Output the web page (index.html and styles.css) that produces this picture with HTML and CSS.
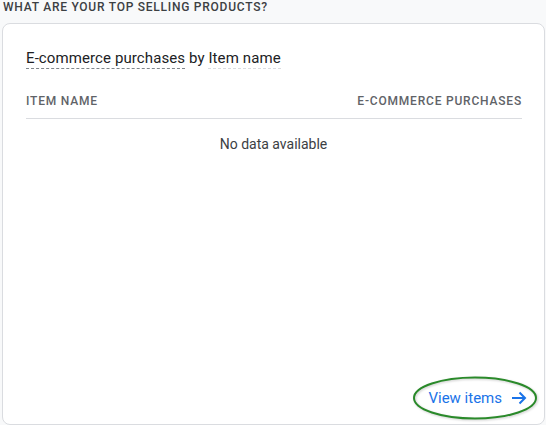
FILE: index.html
```html
<!DOCTYPE html>
<html>
<head>
<meta charset="utf-8">
<link rel="stylesheet" href="styles.css">
</head>
<body>
<div class="section-title">WHAT ARE YOUR TOP SELLING PRODUCTS?</div>
<div class="card">
  <div class="card-title"><span class="dim">E-commerce purchases</span> by <span class="dim light">Item name</span></div>
  <div class="table-head">
    <span>ITEM NAME</span>
    <span>E-COMMERCE PURCHASES</span>
  </div>
  <div class="empty">No data available</div>
  <div class="footer">
    <a class="view-link">View items
      <svg class="arrow" width="16" height="16" viewBox="0 0 16 16"><path d="M1 8h13M8.5 2.5L14 8l-5.5 5.5" fill="none" stroke="#1a73e8" stroke-width="2"/></svg>
    </a>
    <svg class="ellipse" width="130" height="48" viewBox="0 0 130 48"><ellipse cx="64" cy="23" rx="61" ry="20.5" fill="none" stroke="#2a8a2a" stroke-width="2"/></svg>
  </div>
</div>
</body>
</html>
```
FILE: styles.css
```css
html, body { margin: 0; padding: 0; }
body {
  background: #f8f9fa;
  font-family: Roboto, "Liberation Sans", sans-serif;
  width: 546px;
  height: 425px;
  overflow: hidden;
}
.section-title {
  font-size: 12px;
  font-weight: 500;
  letter-spacing: 0.75px;
  color: #3c4043;
  padding: 0 0 0 3px;
  height: 23px;
  line-height: 15px;
}
.card {
  margin-left: 2px;
  width: 541px;
  height: 400px;
  background: #fff;
  border: 1px solid #dadce0;
  border-radius: 8px;
  box-sizing: content-box;
  padding: 0;
  display: flex;
  flex-direction: column;
}
.card-title {
  margin: 24px 23px 0 23px;
  font-size: 15px;
  line-height: 20px;
  color: #202124;
  letter-spacing: 0.1px;
}
.dim { border-bottom: 1px dashed #80868b; padding-bottom: 1px; }
.dim.light { border-bottom-color: #dadce0; }
.table-head {
  margin: 26px 22px 0 23px;
  display: flex;
  justify-content: space-between;
  font-size: 12px;
  font-weight: 500;
  letter-spacing: 0.8px;
  color: #5f6368;
  line-height: 14px;
  padding-bottom: 10px;
  border-bottom: 1px solid #dadce0;
}
.empty {
  text-align: center;
  font-size: 14px;
  color: #3c4043;
  margin-top: 17px;
  line-height: 16px;
}
.footer {
  margin-top: auto;
  position: relative;
  display: flex;
  justify-content: flex-end;
  padding: 0 17px 17px 0;
}
.view-link {
  display: flex;
  align-items: center;
  gap: 9px;
  color: #1a73e8;
  font-size: 15px;
  line-height: 18px;
}
.ellipse {
  position: absolute;
  right: 3px;
  top: -14px;
  filter: drop-shadow(1px 1px 1px rgba(0,0,0,0.2));
}
```
